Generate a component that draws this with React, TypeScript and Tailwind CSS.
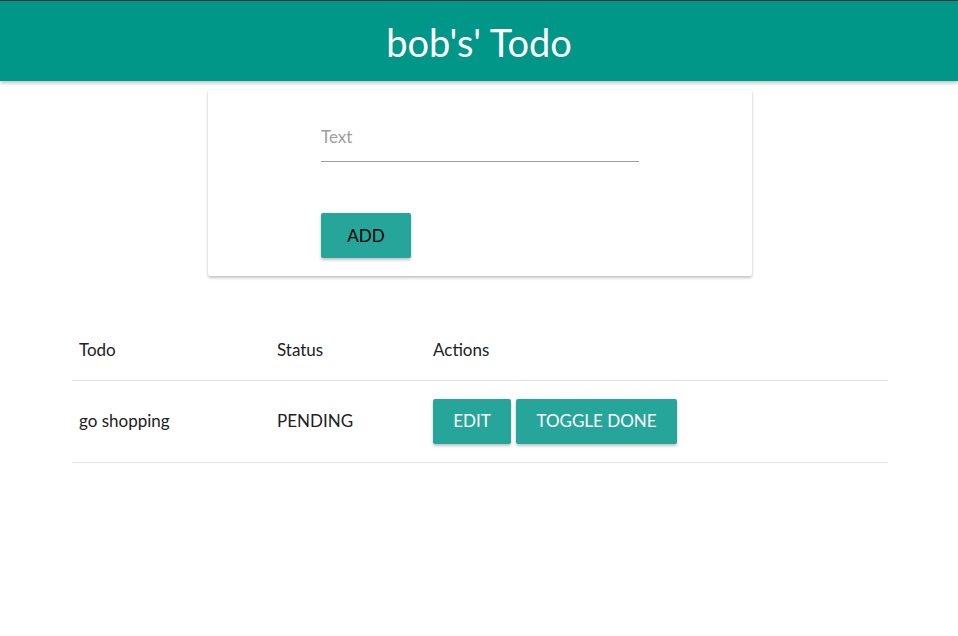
import React from 'react';

const todos = [{ text: 'go shopping', status: 'PENDING' }];

export default function App() {
  return (
    <div className="min-h-[636px] bg-white font-['Lato',sans-serif] text-[#212121]">
      <nav className="flex h-[81px] items-center justify-center border-t border-[#263238] bg-[#009688] shadow-[0_2px_4px_rgba(0,0,0,0.25)]">
        <h1 className="pt-[2px] text-[38px] leading-none text-white">bob's' Todo</h1>
      </nav>

      <div className="ml-[208px] mt-[9px] w-[544px] rounded-[2px] bg-white pb-[18px] pl-[113px] pt-[23px] shadow-[0_2px_3px_rgba(0,0,0,0.22),0_0_3px_rgba(0,0,0,0.08)]">
        <input
          placeholder="Text"
          className="block h-[49px] w-[318px] border-b border-[#9e9e9e] bg-transparent pb-[2px] text-[17px] outline-none placeholder:text-[#9e9e9e]"
        />
        <button className="mt-[51px] h-[45px] w-[90px] rounded-[2px] bg-[#26a69a] text-[17px] text-black shadow-[0_2px_3px_rgba(0,0,0,0.25)]">
          ADD
        </button>
      </div>

      <table className="ml-[72px] mt-[44px] w-[816px] table-fixed border-collapse text-left text-[17px]">
        <colgroup>
          <col className="w-[200px]" />
          <col className="w-[161px]" />
          <col />
        </colgroup>
        <thead>
          <tr className="border-b border-[#e0e0e0]">
            <th className="h-[60px] px-[7px] font-normal">Todo</th>
            <th className="px-[5px] font-normal">Status</th>
            <th className="px-0 font-normal">Actions</th>
          </tr>
        </thead>
        <tbody>
          {todos.map((t) => (
            <tr key={t.text} className="border-b border-[#e0e0e0]">
              <td className="h-[82px] px-[7px]">{t.text}</td>
              <td className="px-[5px]">{t.status}</td>
              <td className="px-0">
                <div className="flex gap-[5px]">
                  <button className="h-[45px] w-[78px] rounded-[2px] bg-[#26a69a] text-[17px] text-white shadow-[0_2px_3px_rgba(0,0,0,0.25)]">
                    EDIT
                  </button>
                  <button className="h-[45px] w-[161px] rounded-[2px] bg-[#26a69a] text-[17px] text-white shadow-[0_2px_3px_rgba(0,0,0,0.25)]">
                    TOGGLE DONE
                  </button>
                </div>
              </td>
            </tr>
          ))}
        </tbody>
      </table>
    </div>
  );
}
